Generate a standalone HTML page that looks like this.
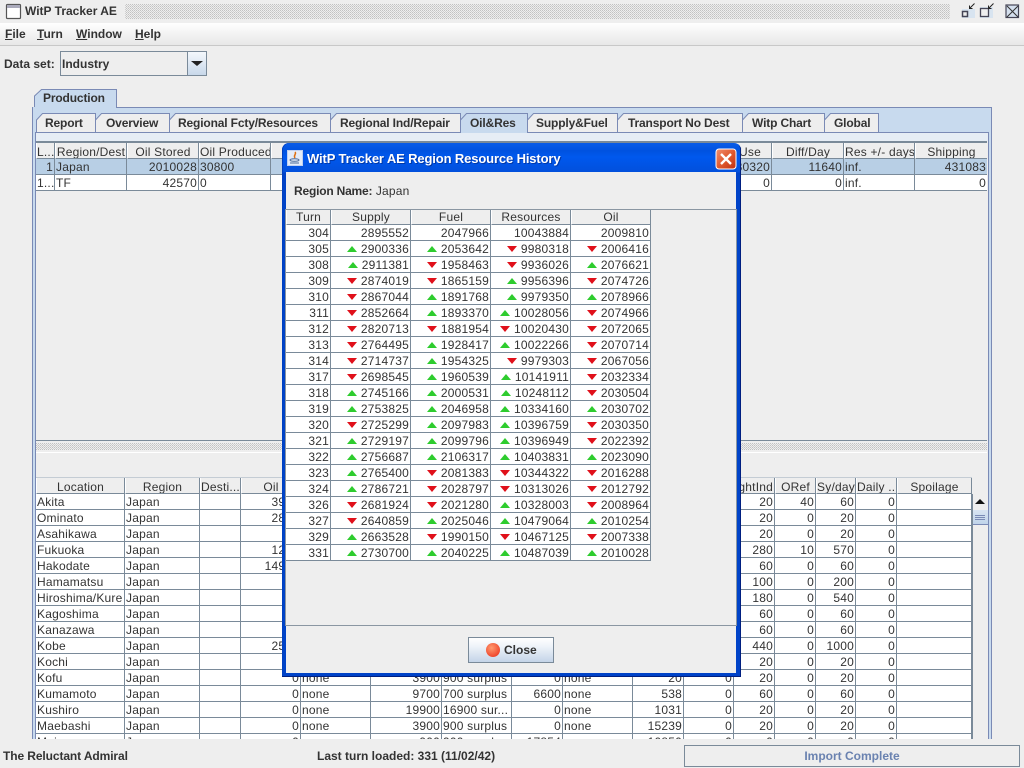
<!DOCTYPE html>
<html><head><meta charset="utf-8"><title>WitP Tracker AE</title>
<style>
html,body{margin:0;padding:0;width:1024px;height:768px;overflow:hidden;background:#eeeeee;font-family:"Liberation Sans",Arial,sans-serif;font-size:12px;color:#333}
.a{position:absolute}
b,.b{font-weight:bold}
table{border-collapse:separate;border-spacing:0;table-layout:fixed;position:absolute;left:0;top:0;font-size:12px;letter-spacing:.2px;color:#333}
td,th{box-sizing:border-box;height:16px;padding:1px 1px 0;border-right:1px solid #7a8a99;border-bottom:1px solid #7a8a99;white-space:nowrap;overflow:hidden;line-height:14px;font-weight:normal;background:#fff}
th{background:#eeeeee;text-align:center;border-left:1px solid #fff;padding:3px 0 0;line-height:12px}
th.dh{height:15px;line-height:14px;padding-top:0}
td.r{text-align:right}
tr.sel td{background:#b8cfe5}
i.u,i.d{display:inline-block;width:0;height:0;border-left:5px solid transparent;border-right:5px solid transparent;vertical-align:1px;margin-right:4px}
i.u{border-bottom:6px solid #2ecc2e}
i.d{border-top:6px solid #e0101a}
u{text-decoration:underline}
</style></head><body>

<!-- main title bar -->
<div class="a" style="left:0;top:0;width:1024px;height:23px;background:#eeeeee"></div>
<svg class="a" style="left:0;top:0" width="1024" height="24">
<defs><pattern id="dots" width="2" height="2" patternUnits="userSpaceOnUse"><rect width="1" height="1" fill="#c2c2c2"/><rect x="1" y="1" width="1" height="1" fill="#d0d0d0"/></pattern></defs>
<rect x="125" y="4" width="825" height="15" fill="url(#dots)"/>
<rect x="6.5" y="4.5" width="14" height="14" rx="1" fill="#fff" stroke="#555" stroke-width="1.2"/>
<rect x="7" y="5" width="13" height="3" fill="#aab"/>
<rect x="962" y="9" width="13" height="9" fill="#d8e4f0"/>
<rect x="962.5" y="11.5" width="5" height="5" fill="#eee" stroke="#445" stroke-width="1.5"/>
<path d="M974.5 3.5 L969.5 8.5 M969.5 5.5 V8.5 H972.5" fill="none" stroke="#222" stroke-width="1"/>
<rect x="980" y="7" width="13" height="11" fill="#d8e4f0"/>
<rect x="980.5" y="8.5" width="8" height="8" fill="#eee" stroke="#445" stroke-width="1.3"/>
<path d="M993.5 3.5 L988.5 8.5 M988.5 5.5 V8.5 H991.5" fill="none" stroke="#222" stroke-width="1"/>
<rect x="1006" y="5" width="12.5" height="12.5" fill="#d5e0ee" stroke="#445" stroke-width="1.2"/>
<path d="M1007 6 L1018 17 M1018 6 L1007 17" stroke="#333" stroke-width="1"/>
</svg>
<div class="a b" style="left:25px;top:4px;line-height:15px;font-size:12px">WitP Tracker AE</div>

<!-- menu bar -->
<div class="a" style="left:0;top:23px;width:1024px;height:22px;background:linear-gradient(#ffffff,#f4f4f4 45%,#e8e8e8);border-bottom:1px solid #c8c8c8"></div>
<div class="a b" style="left:5px;top:27px;line-height:15px"><u>F</u>ile</div>
<div class="a b" style="left:37px;top:27px;line-height:15px"><u>T</u>urn</div>
<div class="a b" style="left:76px;top:27px;line-height:15px"><u>W</u>indow</div>
<div class="a b" style="left:135px;top:27px;line-height:15px"><u>H</u>elp</div>

<!-- data set -->
<div class="a b" style="left:4px;top:57px;line-height:15px">Data set:</div>
<div class="a" style="left:60px;top:51px;width:147px;height:25px;box-sizing:border-box;border:1px solid #7a8a99;background:#eeeeee"></div>
<div class="a b" style="left:62px;top:57px;line-height:15px">Industry</div>
<div class="a" style="left:187px;top:52px;width:19px;height:23px;box-sizing:border-box;border-left:1px solid #7a8a99;background:linear-gradient(#f4f8fc,#c8d8ea)"></div>
<div class="a" style="left:191px;top:61px;width:0;height:0;border-left:6px solid transparent;border-right:6px solid transparent;border-top:5px solid #222"></div>

<!-- outer tab pane -->
<div class="a" style="left:32px;top:107px;width:960px;height:632px;box-sizing:border-box;border:1px solid #7a8ab5;border-bottom:0;background:#c8daee"></div>
<!-- inner tab content -->
<div class="a" style="left:35px;top:132px;width:954px;height:607px;box-sizing:border-box;border:1px solid #7a8ab5;border-bottom:0;background:#eeeeee"></div>
<div class="a" style="left:36px;top:133px;width:952px;height:8px;background:#e6edf5"></div>

<!-- tabs -->
<svg class="a" style="left:0;top:85px" width="1024" height="50" font-family="Liberation Sans, Arial, sans-serif" font-size="12" font-weight="bold" fill="#333" letter-spacing="-.15">
<path d="M34.5 23 V11 L41.5 4.5 H116.5 V23" fill="#c8daee" stroke="#7a8ab5"/>
<rect x="33" y="22" width="83" height="2" fill="#c8daee"/>
<text x="43" y="17">Production</text>
<g fill="#eeeeee" stroke="#7a8ab5">
<path d="M36.5 47 V35 L42.5 28.5 H95.5 V47"/>
<path d="M95.5 47 V35 L101.5 28.5 H169.5 V47"/>
<path d="M169.5 47 V35 L175.5 28.5 H330.5 V47"/>
<path d="M330.5 47 V35 L336.5 28.5 H460.5 V47"/>
<path d="M527.5 47 V35 L533.5 28.5 H617.5 V47"/>
<path d="M617.5 47 V35 L623.5 28.5 H742.5 V47"/>
<path d="M742.5 47 V35 L748.5 28.5 H824.5 V47"/>
<path d="M824.5 47 V35 L830.5 28.5 H878.5 V47"/>
</g>
<path d="M460.5 47 V35 L466.5 28.5 H527.5 V47" fill="#c8daee" stroke="#7a8ab5"/>
<rect x="461" y="46" width="66" height="2" fill="#c8daee"/>
<text x="45" y="42">Report</text>
<text x="106" y="42">Overview</text>
<text x="178" y="42">Regional Fcty/Resources</text>
<text x="340" y="42">Regional Ind/Repair</text>
<text x="470" y="42">Oil&amp;Res</text>
<text x="536" y="42">Supply&amp;Fuel</text>
<text x="628" y="42">Transport No Dest</text>
<text x="752" y="42">Witp Chart</text>
<text x="834" y="42">Global</text>
</svg>

<!-- top table -->
<div class="a" style="left:36px;top:141px;width:951px;height:2px;background:#7a8a99"></div>
<div class="a" style="left:36px;top:143px;width:951px;height:48px;overflow:hidden">
<table style="width:951px">
<colgroup><col style="width:19px"><col style="width:72px"><col style="width:72px"><col style="width:72px"><col style="width:430px"><col style="width:71px"><col style="width:72px"><col style="width:71px"><col style="width:72px"></colgroup>
<tr><th>L...</th><th>Region/Dest</th><th>Oil Stored</th><th>Oil Produced</th><th></th><th style="text-align:right;padding-right:10px">Use</th><th>Diff/Day</th><th>Res +/- days</th><th style="border-right:0">Shipping</th></tr>
<tr class="sel"><td class="r">1</td><td>Japan</td><td class="r">2010028</td><td>30800</td><td></td><td class="r">30320</td><td class="r">11640</td><td>inf.</td><td class="r" style="border-right:0">431083</td></tr>
<tr><td>1...</td><td>TF</td><td class="r">42570</td><td>0</td><td></td><td class="r">0</td><td class="r">0</td><td>inf.</td><td class="r" style="border-right:0">0</td></tr>
</table></div>

<!-- splitter -->
<div class="a" style="left:36px;top:440px;width:951px;height:1px;background:#7a8a99"></div>
<svg class="a" style="left:36px;top:443px" width="951" height="7"><rect width="951" height="7" fill="url(#dots)"/></svg>
<div class="a" style="left:36px;top:452px;width:951px;height:1px;background:#fff"></div>

<!-- bottom table -->
<div class="a" style="left:36px;top:477px;width:936px;height:1px;background:#c4ccd4"></div>
<div class="a" style="left:36px;top:478px;width:937px;height:261px;overflow:hidden">
<table style="width:936px">
<colgroup><col style="width:89px"><col style="width:75px"><col style="width:41px"><col style="width:60px"><col style="width:70px"><col style="width:71px"><col style="width:70px"><col style="width:51px"><col style="width:70px"><col style="width:51px"><col style="width:50px"><col style="width:41px"><col style="width:41px"><col style="width:40px"><col style="width:41px"><col style="width:75px"></colgroup>
<tr><th>Location</th><th>Region</th><th>Desti...</th><th>Oil</th><th></th><th></th><th></th><th></th><th></th><th></th><th></th><th style="direction:rtl;text-align:right;padding-right:1px">LightInd</th><th>ORef</th><th>Sy/day</th><th>Daily ...</th><th>Spoilage</th></tr>
<tr><td>Akita</td><td>Japan</td><td></td><td class="r">3900</td><td></td><td></td><td></td><td></td><td></td><td></td><td></td><td class="r">20</td><td class="r">40</td><td class="r">60</td><td class="r">0</td><td></td></tr>
<tr><td>Ominato</td><td>Japan</td><td></td><td class="r">2800</td><td></td><td></td><td></td><td></td><td></td><td></td><td></td><td class="r">20</td><td class="r">0</td><td class="r">20</td><td class="r">0</td><td></td></tr>
<tr><td>Asahikawa</td><td>Japan</td><td></td><td class="r">0</td><td></td><td></td><td></td><td></td><td></td><td></td><td></td><td class="r">20</td><td class="r">0</td><td class="r">20</td><td class="r">0</td><td></td></tr>
<tr><td>Fukuoka</td><td>Japan</td><td></td><td class="r">1200</td><td></td><td></td><td></td><td></td><td></td><td></td><td></td><td class="r">280</td><td class="r">10</td><td class="r">570</td><td class="r">0</td><td></td></tr>
<tr><td>Hakodate</td><td>Japan</td><td></td><td class="r">14900</td><td></td><td></td><td></td><td></td><td></td><td></td><td></td><td class="r">60</td><td class="r">0</td><td class="r">60</td><td class="r">0</td><td></td></tr>
<tr><td>Hamamatsu</td><td>Japan</td><td></td><td class="r">0</td><td></td><td></td><td></td><td></td><td></td><td></td><td></td><td class="r">100</td><td class="r">0</td><td class="r">200</td><td class="r">0</td><td></td></tr>
<tr><td>Hiroshima/Kure</td><td>Japan</td><td></td><td class="r">0</td><td></td><td></td><td></td><td></td><td></td><td></td><td></td><td class="r">180</td><td class="r">0</td><td class="r">540</td><td class="r">0</td><td></td></tr>
<tr><td>Kagoshima</td><td>Japan</td><td></td><td class="r">0</td><td></td><td></td><td></td><td></td><td></td><td></td><td></td><td class="r">60</td><td class="r">0</td><td class="r">60</td><td class="r">0</td><td></td></tr>
<tr><td>Kanazawa</td><td>Japan</td><td></td><td class="r">0</td><td></td><td></td><td></td><td></td><td></td><td></td><td></td><td class="r">60</td><td class="r">0</td><td class="r">60</td><td class="r">0</td><td></td></tr>
<tr><td>Kobe</td><td>Japan</td><td></td><td class="r">2500</td><td></td><td></td><td></td><td></td><td></td><td></td><td></td><td class="r">440</td><td class="r">0</td><td class="r">1000</td><td class="r">0</td><td></td></tr>
<tr><td>Kochi</td><td>Japan</td><td></td><td class="r">0</td><td></td><td></td><td></td><td></td><td></td><td></td><td></td><td class="r">20</td><td class="r">0</td><td class="r">20</td><td class="r">0</td><td></td></tr>
<tr><td>Kofu</td><td>Japan</td><td></td><td class="r">0</td><td>none</td><td class="r">3900</td><td>900 surplus</td><td class="r">0</td><td>none</td><td class="r">20</td><td class="r">0</td><td class="r">20</td><td class="r">0</td><td class="r">20</td><td class="r">0</td><td></td></tr>
<tr><td>Kumamoto</td><td>Japan</td><td></td><td class="r">0</td><td>none</td><td class="r">9700</td><td>700 surplus</td><td class="r">6600</td><td>none</td><td class="r">538</td><td class="r">0</td><td class="r">60</td><td class="r">0</td><td class="r">60</td><td class="r">0</td><td></td></tr>
<tr><td>Kushiro</td><td>Japan</td><td></td><td class="r">0</td><td>none</td><td class="r">19900</td><td>16900 sur...</td><td class="r">0</td><td>none</td><td class="r">1031</td><td class="r">0</td><td class="r">20</td><td class="r">0</td><td class="r">20</td><td class="r">0</td><td></td></tr>
<tr><td>Maebashi</td><td>Japan</td><td></td><td class="r">0</td><td>none</td><td class="r">3900</td><td>900 surplus</td><td class="r">0</td><td>none</td><td class="r">15239</td><td class="r">0</td><td class="r">20</td><td class="r">0</td><td class="r">20</td><td class="r">0</td><td></td></tr>
<tr><td>Maizuru</td><td>Japan</td><td></td><td class="r">0</td><td>none</td><td class="r">900</td><td>900 surplus</td><td class="r">17854</td><td>none</td><td class="r">10850</td><td class="r">0</td><td class="r">0</td><td class="r">0</td><td class="r">0</td><td class="r">0</td><td></td></tr>
</table></div>
<div class="a" style="left:971px;top:494px;width:2px;height:245px;background:#7a8a99"></div>

<!-- scrollbar -->
<div class="a" style="left:973px;top:494px;width:15px;height:245px;background:#eeeeee"></div>
<div class="a" style="left:975px;top:499px;width:0;height:0;border-left:5px solid transparent;border-right:5px solid transparent;border-bottom:5px solid #111"></div>
<div class="a" style="left:973px;top:510px;width:15px;height:15px;box-sizing:border-box;background:linear-gradient(#d8e4f2,#c0d4ea);border-bottom:1px solid #7a8ab5"></div>
<div class="a" style="left:975px;top:515px;width:10px;height:1px;background:#7a8ab5;box-shadow:0 2px 0 #7a8ab5,0 4px 0 #7a8ab5"></div>

<!-- status bar -->
<div class="a" style="left:0;top:739px;width:1024px;height:29px;background:#eeeeee"></div>
<div class="a b" style="left:3px;top:749px;line-height:15px;letter-spacing:-.1px">The Reluctant Admiral</div>
<div class="a b" style="left:317px;top:749px;line-height:15px">Last turn loaded: 331 (11/02/42)</div>
<div class="a b" style="left:684px;top:745px;width:336px;height:22px;box-sizing:border-box;border:1px solid #7a8a99;text-align:center;line-height:20px;color:#6a82b0;font-size:12px">Import Complete</div>

<!-- dialog -->
<div class="a" style="left:282px;top:143px;width:459px;height:534px;box-sizing:border-box;border-radius:7px 7px 0 0;background:linear-gradient(#0a5ce8,#0052e0 8px,#0058ee 14px,#0250dc 29px,#0043c8 30px);box-shadow:inset -1px -1px 0 #001f80,inset 1px 0 0 #0040c0"></div>
<div class="a" style="left:286px;top:172px;width:450px;height:501px;background:#eeeeee"></div>
<svg class="a" style="left:287px;top:150px" width="16" height="16"><rect x=".5" y=".5" width="15" height="15" fill="#e4ecf8" stroke="#c0d0f0"/><path d="M8 2 C10 4 6 5 8 8" fill="none" stroke="#e07010" stroke-width="1.5"/><ellipse cx="7.5" cy="10" rx="4.5" ry="1.3" fill="none" stroke="#4a6a9a"/><path d="M3 13 H12" stroke="#4a6a9a"/></svg>
<div class="a b" style="left:307px;top:151px;line-height:16px;font-size:13px;color:#fff;letter-spacing:-.13px;white-space:nowrap;text-shadow:1px 1px 0 #0038a8">WitP Tracker AE Region Resource History</div>
<svg class="a" style="left:715px;top:148px" width="22" height="22"><defs><linearGradient id="rg" x1="0" y1="0" x2="1" y2="1"><stop offset="0" stop-color="#f09070"/><stop offset=".5" stop-color="#e05a30"/><stop offset="1" stop-color="#c03010"/></linearGradient></defs><rect x="1" y="1" width="20" height="20" rx="3" fill="url(#rg)" stroke="#fff"/><path d="M6 6 L16 16 M16 6 L6 16" stroke="#fff" stroke-width="2.4"/></svg>

<div class="a" style="left:294px;top:184px;line-height:15px;letter-spacing:.2px;white-space:nowrap"><b style="letter-spacing:-.2px">Region Name:</b> Japan</div>

<div class="a" style="left:285px;top:209px;width:452px;height:417px;box-sizing:border-box;border:1px solid #8a96a2;background:#eeeeee"></div>
<div class="a" style="left:286px;top:210px;width:365px;height:351px;overflow:hidden">
<table style="width:365px">
<colgroup><col style="width:45px"><col style="width:80px"><col style="width:80px"><col style="width:80px"><col style="width:80px"></colgroup>
<tr><th class="dh">Turn</th><th class="dh">Supply</th><th class="dh">Fuel</th><th class="dh">Resources</th><th class="dh">Oil</th></tr>
<tr><td class="r">304</td><td class="r">2895552</td><td class="r">2047966</td><td class="r">10043884</td><td class="r">2009810</td></tr>
<tr><td class="r">305</td><td class="r"><i class="u"></i>2900336</td><td class="r"><i class="u"></i>2053642</td><td class="r"><i class="d"></i>9980318</td><td class="r"><i class="d"></i>2006416</td></tr>
<tr><td class="r">308</td><td class="r"><i class="u"></i>2911381</td><td class="r"><i class="d"></i>1958463</td><td class="r"><i class="d"></i>9936026</td><td class="r"><i class="u"></i>2076621</td></tr>
<tr><td class="r">309</td><td class="r"><i class="d"></i>2874019</td><td class="r"><i class="d"></i>1865159</td><td class="r"><i class="u"></i>9956396</td><td class="r"><i class="d"></i>2074726</td></tr>
<tr><td class="r">310</td><td class="r"><i class="d"></i>2867044</td><td class="r"><i class="u"></i>1891768</td><td class="r"><i class="u"></i>9979350</td><td class="r"><i class="u"></i>2078966</td></tr>
<tr><td class="r">311</td><td class="r"><i class="d"></i>2852664</td><td class="r"><i class="u"></i>1893370</td><td class="r"><i class="u"></i>10028056</td><td class="r"><i class="d"></i>2074966</td></tr>
<tr><td class="r">312</td><td class="r"><i class="d"></i>2820713</td><td class="r"><i class="d"></i>1881954</td><td class="r"><i class="d"></i>10020430</td><td class="r"><i class="d"></i>2072065</td></tr>
<tr><td class="r">313</td><td class="r"><i class="d"></i>2764495</td><td class="r"><i class="u"></i>1928417</td><td class="r"><i class="u"></i>10022266</td><td class="r"><i class="d"></i>2070714</td></tr>
<tr><td class="r">314</td><td class="r"><i class="d"></i>2714737</td><td class="r"><i class="u"></i>1954325</td><td class="r"><i class="d"></i>9979303</td><td class="r"><i class="d"></i>2067056</td></tr>
<tr><td class="r">317</td><td class="r"><i class="d"></i>2698545</td><td class="r"><i class="u"></i>1960539</td><td class="r"><i class="u"></i>10141911</td><td class="r"><i class="d"></i>2032334</td></tr>
<tr><td class="r">318</td><td class="r"><i class="u"></i>2745166</td><td class="r"><i class="u"></i>2000531</td><td class="r"><i class="u"></i>10248112</td><td class="r"><i class="d"></i>2030504</td></tr>
<tr><td class="r">319</td><td class="r"><i class="u"></i>2753825</td><td class="r"><i class="u"></i>2046958</td><td class="r"><i class="u"></i>10334160</td><td class="r"><i class="u"></i>2030702</td></tr>
<tr><td class="r">320</td><td class="r"><i class="d"></i>2725299</td><td class="r"><i class="u"></i>2097983</td><td class="r"><i class="u"></i>10396759</td><td class="r"><i class="d"></i>2030350</td></tr>
<tr><td class="r">321</td><td class="r"><i class="u"></i>2729197</td><td class="r"><i class="u"></i>2099796</td><td class="r"><i class="u"></i>10396949</td><td class="r"><i class="d"></i>2022392</td></tr>
<tr><td class="r">322</td><td class="r"><i class="u"></i>2756687</td><td class="r"><i class="u"></i>2106317</td><td class="r"><i class="u"></i>10403831</td><td class="r"><i class="u"></i>2023090</td></tr>
<tr><td class="r">323</td><td class="r"><i class="u"></i>2765400</td><td class="r"><i class="d"></i>2081383</td><td class="r"><i class="d"></i>10344322</td><td class="r"><i class="d"></i>2016288</td></tr>
<tr><td class="r">324</td><td class="r"><i class="u"></i>2786721</td><td class="r"><i class="d"></i>2028797</td><td class="r"><i class="d"></i>10313026</td><td class="r"><i class="d"></i>2012792</td></tr>
<tr><td class="r">326</td><td class="r"><i class="d"></i>2681924</td><td class="r"><i class="d"></i>2021280</td><td class="r"><i class="u"></i>10328003</td><td class="r"><i class="d"></i>2008964</td></tr>
<tr><td class="r">327</td><td class="r"><i class="d"></i>2640859</td><td class="r"><i class="u"></i>2025046</td><td class="r"><i class="u"></i>10479064</td><td class="r"><i class="u"></i>2010254</td></tr>
<tr><td class="r">329</td><td class="r"><i class="u"></i>2663528</td><td class="r"><i class="d"></i>1990150</td><td class="r"><i class="d"></i>10467125</td><td class="r"><i class="d"></i>2007338</td></tr>
<tr><td class="r">331</td><td class="r"><i class="u"></i>2730700</td><td class="r"><i class="u"></i>2040225</td><td class="r"><i class="u"></i>10487039</td><td class="r"><i class="u"></i>2010028</td></tr>
</table></div>

<!-- close button -->
<div class="a" style="left:468px;top:637px;width:86px;height:26px;box-sizing:border-box;border:1px solid #7a8a99;background:linear-gradient(#ffffff,#eef3f9 35%,#c4d4e8)"></div>
<div class="a" style="left:486px;top:643px;width:14px;height:14px;border-radius:50%;background:radial-gradient(circle at 40% 35%,#ff9a70,#f04a30 70%,#d84030)"></div>
<div class="a b" style="left:504px;top:643px;line-height:15px">Close</div>

</body></html>
